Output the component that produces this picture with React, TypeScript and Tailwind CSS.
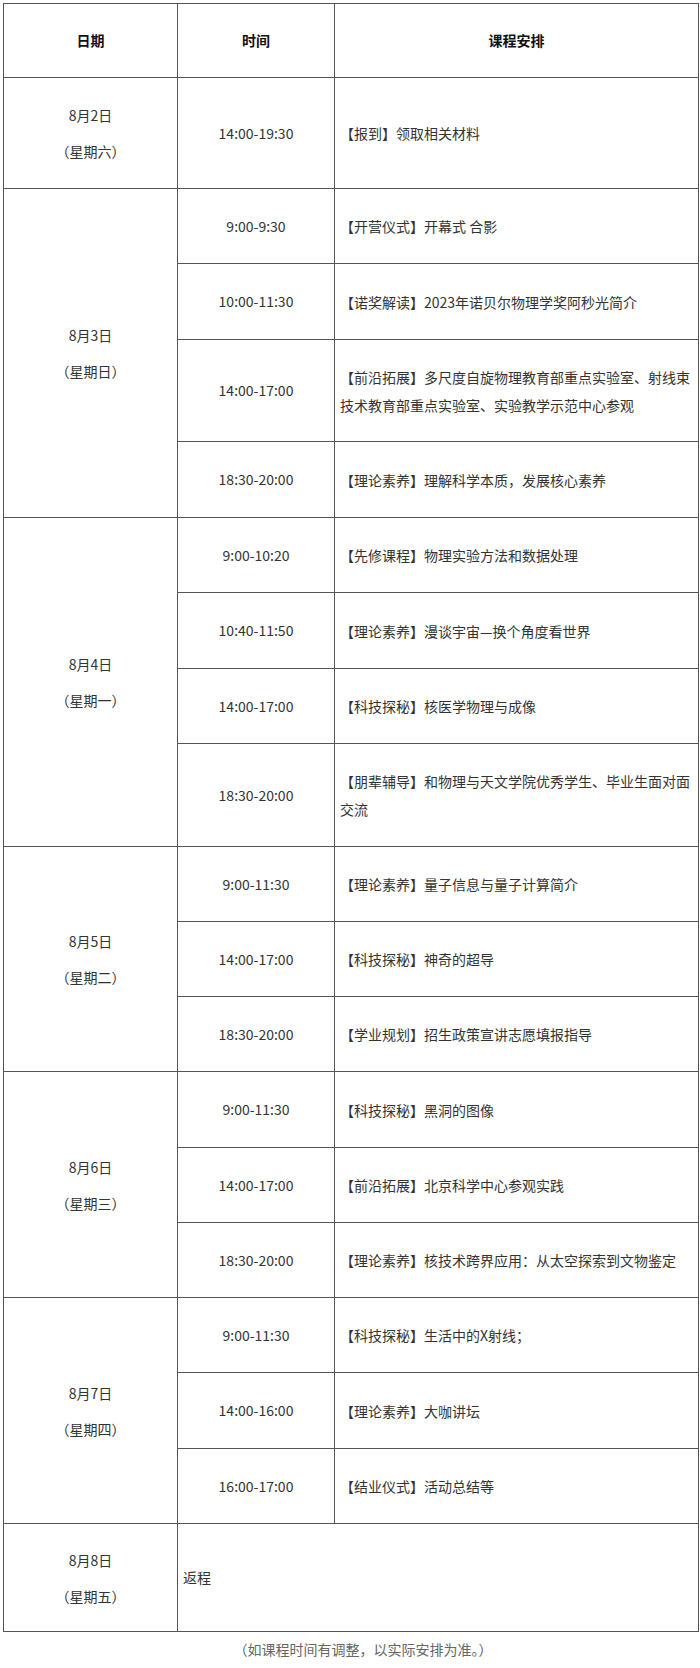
import React from "react";

type Row = { time: string; text: string; h: string };
type Group = { date: string; week: string; rows: Row[] };

const groups: Group[] = [
  { date: "8月2日", week: "（星期六）", rows: [{ time: "14:00-19:30", text: "【报到】领取相关材料", h: "h-[111px]" }] },
  {
    date: "8月3日",
    week: "（星期日）",
    rows: [
      { time: "9:00-9:30", text: "【开营仪式】开幕式 合影", h: "h-[75px]" },
      { time: "10:00-11:30", text: "【诺奖解读】2023年诺贝尔物理学奖阿秒光简介", h: "h-[76px]" },
      { time: "14:00-17:00", text: "【前沿拓展】多尺度自旋物理教育部重点实验室、射线束技术教育部重点实验室、实验教学示范中心参观", h: "h-[102px]" },
      { time: "18:30-20:00", text: "【理论素养】理解科学本质，发展核心素养", h: "h-[76px]" },
    ],
  },
  {
    date: "8月4日",
    week: "（星期一）",
    rows: [
      { time: "9:00-10:20", text: "【先修课程】物理实验方法和数据处理", h: "h-[75px]" },
      { time: "10:40-11:50", text: "【理论素养】漫谈宇宙—换个角度看世界", h: "h-[76px]" },
      { time: "14:00-17:00", text: "【科技探秘】核医学物理与成像", h: "h-[75px]" },
      { time: "18:30-20:00", text: "【朋辈辅导】和物理与天文学院优秀学生、毕业生面对面交流", h: "h-[103px]" },
    ],
  },
  {
    date: "8月5日",
    week: "（星期二）",
    rows: [
      { time: "9:00-11:30", text: "【理论素养】量子信息与量子计算简介", h: "h-[75px]" },
      { time: "14:00-17:00", text: "【科技探秘】神奇的超导", h: "h-[75px]" },
      { time: "18:30-20:00", text: "【学业规划】招生政策宣讲志愿填报指导", h: "h-[75px]" },
    ],
  },
  {
    date: "8月6日",
    week: "（星期三）",
    rows: [
      { time: "9:00-11:30", text: "【科技探秘】黑洞的图像", h: "h-[76px]" },
      { time: "14:00-17:00", text: "【前沿拓展】北京科学中心参观实践", h: "h-[75px]" },
      { time: "18:30-20:00", text: "【理论素养】核技术跨界应用：从太空探索到文物鉴定", h: "h-[75px]" },
    ],
  },
  {
    date: "8月7日",
    week: "（星期四）",
    rows: [
      { time: "9:00-11:30", text: "【科技探秘】生活中的X射线；", h: "h-[75px]" },
      { time: "14:00-16:00", text: "【理论素养】大咖讲坛", h: "h-[76px]" },
      { time: "16:00-17:00", text: "【结业仪式】活动总结等", h: "h-[75px]" },
    ],
  },
];

const font = { fontFamily: '"Noto Sans CJK SC", "Noto Sans", sans-serif' };

export default function App() {
  return (
    <div className="w-[700px] h-[1668px] bg-white pt-[3px] pl-[3px] text-[14px] text-[#333]" style={font}>
      <div className="w-[696px] border-t border-l border-[#555]">
        {/* header */}
        <div className="flex h-[74px] font-bold text-[#111]">
          <div className="w-[174px] flex items-center justify-center border-r border-b border-[#555]">日期</div>
          <div className="w-[157px] flex items-center justify-center border-r border-b border-[#555]">时间</div>
          <div className="w-[364px] flex items-center justify-center border-r border-b border-[#555]">课程安排</div>
        </div>
        {groups.map((g) => (
          <div key={g.date} className="flex">
            <div className="w-[174px] flex flex-col items-center justify-center border-r border-b border-[#555] leading-[36px]">
              <div>{g.date}</div>
              <div>{g.week}</div>
            </div>
            <div className="flex flex-col">
              {g.rows.map((r) => (
                <div key={r.time + r.text} className={`flex ${r.h}`}>
                  <div className="w-[157px] flex items-center justify-center border-r border-b border-[#555]">{r.time}</div>
                  <div className="w-[364px] flex items-center px-[5px] leading-[28px] border-r border-b border-[#555]">
                    <div>{r.text}</div>
                  </div>
                </div>
              ))}
            </div>
          </div>
        ))}
        <div className="flex h-[108px]">
          <div className="w-[174px] flex flex-col items-center justify-center border-r border-b border-[#555] leading-[36px]">
            <div>8月8日</div>
            <div>（星期五）</div>
          </div>
          <div className="w-[521px] flex items-center px-[5px] border-r border-b border-[#555]">返程</div>
        </div>
      </div>
      <div className="w-[696px] pl-[24px] mt-[3px] text-center leading-[28px] text-[#666]">（如课程时间有调整，以实际安排为准。）</div>
    </div>
  );
}
